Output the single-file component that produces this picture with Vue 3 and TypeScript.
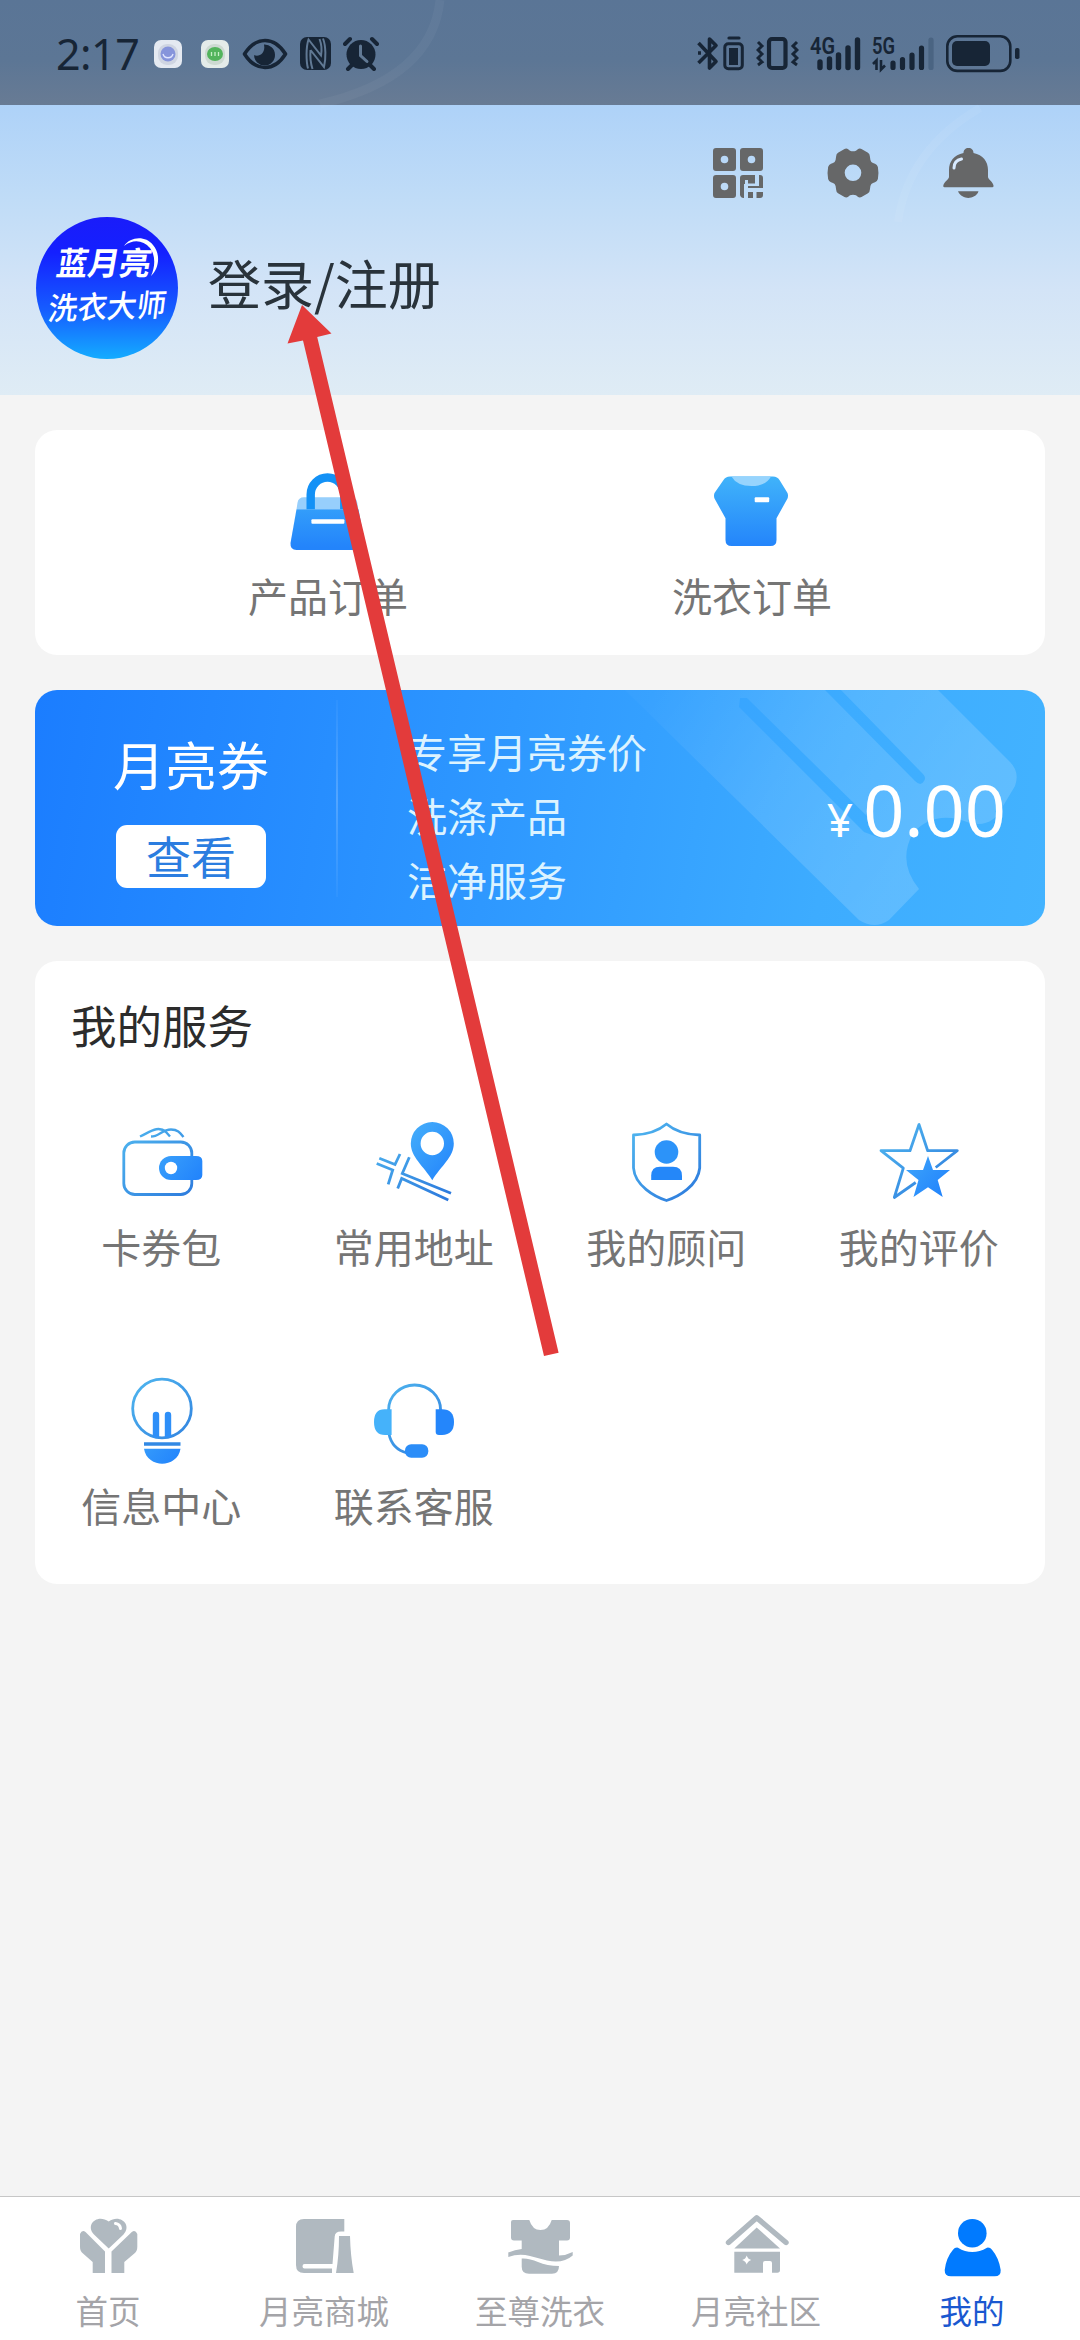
<script setup lang="ts">
interface Entry {
  id: string
  label: string
}

const orders: Entry[] = [
  { id: 'bag', label: '产品订单' },
  { id: 'shirt', label: '洗衣订单' },
]

const services: Entry[] = [
  { id: 'wallet', label: '卡券包' },
  { id: 'address', label: '常用地址' },
  { id: 'advisor', label: '我的顾问' },
  { id: 'review', label: '我的评价' },
  { id: 'info', label: '信息中心' },
  { id: 'support', label: '联系客服' },
]

const benefits: string[] = ['专享月亮券价', '洗涤产品', '洁净服务']

const tabs: Entry[] = [
  { id: 'home', label: '首页' },
  { id: 'mall', label: '月亮商城' },
  { id: 'wash', label: '至尊洗衣' },
  { id: 'community', label: '月亮社区' },
  { id: 'mine', label: '我的' },
]

const activeTab = 'mine'
</script>

<template>
  <div class="screen">
    <svg class="defs" width="0" height="0" aria-hidden="true">
      <defs>
        <linearGradient id="g-fill" x1="0" y1="0" x2="0" y2="90" gradientUnits="userSpaceOnUse">
          <stop offset="0.1" stop-color="#41b4fa" />
          <stop offset="0.9" stop-color="#2384fb" />
        </linearGradient>
        <linearGradient id="g-line" x1="10" y1="10" x2="80" y2="85" gradientUnits="userSpaceOnUse">
          <stop offset="0" stop-color="#4fb6ef" />
          <stop offset="1" stop-color="#2b77dc" />
        </linearGradient>
        <linearGradient id="g-solid" x1="10" y1="15" x2="80" y2="75" gradientUnits="userSpaceOnUse">
          <stop offset="0" stop-color="#4fbafa" />
          <stop offset="1" stop-color="#1f80fc" />
        </linearGradient>
      </defs>
    </svg>

    <header class="header">
      <div class="status">
        <span class="time">2:17</span>
        <svg class="app-one" width="28" height="28" viewBox="0 0 28 28">
          <rect width="28" height="28" rx="7" fill="#e4e9f1" />
          <rect x="4" y="4" width="20" height="21" rx="9" fill="#cfd5e2" />
          <circle cx="14" cy="14" r="7.5" fill="#8694db" />
          <path d="M9 14a5.2 5.2 0 0 0 10 0" fill="none" stroke="#e0e5ff" stroke-width="1.4" />
        </svg>
        <svg class="app-two" width="28" height="28" viewBox="0 0 28 28">
          <rect width="28" height="28" rx="7" fill="#e4ebe9" />
          <rect x="4" y="4" width="20" height="21" rx="9" fill="#cdd9d2" />
          <ellipse cx="14" cy="14" rx="8" ry="7" fill="#52b45c" />
          <path d="M10.500 12v4M14 12v4M17.500 12v4" stroke="#c6efc6" stroke-width="1.300" />
        </svg>
        <svg class="eye" width="46" height="32" viewBox="0 0 46 32">
          <path d="M2.500 16Q11 2.500 23 2.500T43.500 16Q35 29.500 23 29.500T2.500 16Z" fill="none" stroke="#172536" stroke-width="3.600" stroke-linejoin="round" />
          <path d="M22 6.500a10.500 10.500 0 1 1-10 10.500c4 2.500 12-1 10-10.500Z" fill="#172536" />
        </svg>
        <svg class="nfc" width="31" height="33" viewBox="0 0 31 33">
          <rect width="31" height="33" rx="7" fill="#172536" />
          <path d="M8 31.500C6 24 6 10 8.500 2.500L21 18.500C22 13 21.500 7 19.500 2M10.500 13C10 20 10.500 26 12.500 32M10.500 13 24 30C26 22 26 9 23 1.500" fill="none" stroke="#617994" stroke-width="2" />
        </svg>
        <svg class="alarm" width="36" height="35" viewBox="0 0 36 35">
          <circle cx="18" cy="18.500" r="14.500" fill="#172536" />
          <path d="M2 8 7 3M34 8 29 3M5 33l4-4M31 33l-4-4" stroke="#172536" stroke-width="4" stroke-linecap="round" />
          <path d="M17.500 10v9.500l6.500 6" fill="none" stroke="#617994" stroke-width="3" stroke-linecap="round" />
        </svg>

        <div class="status-right">
          <svg width="48" height="35" viewBox="0 0 48 35">
            <path d="M1.500 7 19 25.500 12.500 32V3L19 9.500 1.500 27M1 17h3" fill="none" stroke="#172536" stroke-width="3.600" stroke-linejoin="round" />
            <rect x="27.800" y="7.800" width="17.500" height="25" rx="3.500" fill="none" stroke="#172536" stroke-width="3" />
            <rect x="32" y="12" width="9" height="17" fill="#172536" />
            <path d="M32 2h10" stroke="#172536" stroke-width="3.200" stroke-linecap="round" />
          </svg>
          <svg class="vibrate" width="43" height="35" viewBox="0 0 43 35">
            <rect x="13" y="3" width="16.500" height="29" rx="3" fill="none" stroke="#172536" stroke-width="4.200" />
            <path d="m2 6 4 4-4 4 4 4-4 4 4 4-4 3M41 6l-4 4 4 4-4 4 4 4-4 4 4 3" fill="none" stroke="#172536" stroke-width="3" />
          </svg>
          <svg class="signal4" width="51" height="35" viewBox="0 0 51 35">
            <text class="net" x="0" y="17.500" textLength="25" lengthAdjust="spacingAndGlyphs">4G</text>
            <path d="M10 26v5.500M19.500 23v8.500M28.500 19v12.500M38 12v19.500M47.500 4v27.500" stroke="#172536" stroke-width="5.400" stroke-linecap="round" />
          </svg>
          <svg class="signal5" width="62" height="35" viewBox="0 0 62 35">
            <text class="net" x="0" y="17.500" textLength="23" lengthAdjust="spacingAndGlyphs">5G</text>
            <path d="m1 28 3.500-3.500V34M9 24v9.500l4-4" fill="none" stroke="#172536" stroke-width="2.600" />
            <path d="M21 27v4.500M30.500 23.500v8M40 19v12.500M49.500 12v19.500" stroke="#172536" stroke-width="5.200" stroke-linecap="round" />
            <path d="M59 4v27.500" stroke="#4a6482" stroke-width="5.200" stroke-linecap="round" />
          </svg>
          <svg class="battery" width="74" height="38" viewBox="0 0 74 38">
            <rect x="1.300" y="1.300" width="63" height="34.600" rx="10" fill="none" stroke="#172536" stroke-width="2.600" />
            <rect x="6" y="6" width="38" height="25" rx="5" fill="#172536" />
            <rect x="69" y="13" width="4.500" height="11" rx="1.800" fill="#172536" />
          </svg>
        </div>
      </div>

      <div class="tools">
        <svg width="50" height="50" viewBox="0 0 50 50">
          <path fill="#666768" fill-rule="evenodd" d="M3 0h17a3 3 0 0 1 3 3v17a3 3 0 0 1-3 3H3a3 3 0 0 1-3-3V3a3 3 0 0 1 3-3Zm8.500 7.700a3.800 3.800 0 1 0 0 7.600 3.800 3.800 0 0 0 0-7.600ZM30 0h17a3 3 0 0 1 3 3v17a3 3 0 0 1-3 3H30a3 3 0 0 1-3-3V3a3 3 0 0 1 3-3Zm8.500 7.700a3.800 3.800 0 1 0 0 7.600 3.800 3.800 0 0 0 0-7.600ZM3 27h17a3 3 0 0 1 3 3v17a3 3 0 0 1-3 3H3a3 3 0 0 1-3-3V30a3 3 0 0 1 3-3Zm8.500 7.700a3.800 3.800 0 1 0 0 7.600 3.800 3.800 0 0 0 0-7.600Z" />
          <path fill="#666768" d="M30 27h12v8.500h-7V32h-3v4h-1v14a4 4 0 0 1-4-3V30a3 3 0 0 1 3-3ZM46 27h1a3 3 0 0 1 3 3v10H35v-2h11ZM35 44h5v6h-5ZM43.500 44H50v3a3 3 0 0 1-3 3h-3.500Z" />
        </svg>
        <svg width="52" height="50" viewBox="0 0 52 50">
          <path fill="#666768" fill-rule="evenodd" d="M17.500 1Q19.500 0 21.500 1.500L23 2.700Q26 4 29 2.700L30.500 1.500Q32.500 0 34.500 1L41 4.800Q42.800 6 42.900 8.500L43.400 12Q44 14.300 46 15L48 15.800Q50.200 16.500 50.900 19Q52 25 50.900 31Q50.200 33.500 48 34.200L46 35Q44 35.700 43.400 38L42.900 41.500Q42.800 44 41 45.200L34.500 49Q32.500 50 30.500 48.500L29 47.300Q26 46 23 47.300L21.500 48.500Q19.500 50 17.500 49L11 45.200Q9.200 44 9.100 41.500L8.600 38Q8 35.700 6 35L4 34.200Q1.800 33.500 1.100 31Q0 25 1.100 19Q1.800 16.500 4 15.800L6 15Q8 14.300 8.600 12L9.100 8.500Q9.200 6 11 4.800ZM26 16.500a8.300 8.300 0 1 0 0 16.600 8.300 8.300 0 0 0 0-16.600Z" />
        </svg>
        <svg width="51" height="50" viewBox="0 0 51 50">
          <path fill="#666768" d="M25.500 0c3 0 5 2 5 5C40 7 45 13.500 45 22v7c0 2 5 5 5.500 8.500.3 1.500-.8 1.800-2 1.800h-46C1 39.300 0 39 .3 37.500 1 34 6 31 6 29v-7C6 13.500 11 7 20.500 5c0-3 2-5 5-5ZM15 43.300h20.500C34 48 29 50 25.300 50S17 48 15 43.300Z" />
          <path d="M11 20c0-4.500 2.500-8 7.500-9" fill="none" stroke="#d8eaff" stroke-width="3" stroke-linecap="round" />
        </svg>
      </div>

      <div class="profile">
        <svg class="avatar" width="142" height="142" viewBox="0 0 142 142">
          <defs>
            <linearGradient id="g-avatar" x1="0" y1="0" x2="0" y2="1">
              <stop offset="0" stop-color="#1a1cfa" />
              <stop offset="0.25" stop-color="#1420ff" />
              <stop offset="0.65" stop-color="#165cff" />
              <stop offset="1" stop-color="#14acff" />
            </linearGradient>
          </defs>
          <circle cx="71" cy="71" r="71" fill="url(#g-avatar)" />
          <text class="brand" x="0" y="0" transform="translate(19 58) skewX(-10)" textLength="94" lengthAdjust="spacingAndGlyphs">蓝月亮</text>
          <path d="M88 29C94 20 109 18 117 28c8 9 6 24-2 31 4-9 5-20-1-28-7-8-17-9-26-2Z" fill="#fff" />
          <text class="slogan" x="0" y="0" transform="translate(11 103) rotate(-2) skewX(-9)" textLength="118" lengthAdjust="spacingAndGlyphs">洗衣大师</text>
        </svg>
        <span class="login">登录/注册</span>
      </div>

      <svg class="rings" width="1080" height="395" viewBox="0 0 1080 395" aria-hidden="true">
        <path d="M440 0Q432 78 320 104" fill="none" stroke="#fff" stroke-opacity="0.04" stroke-width="9" />
        <path d="M980 108Q908 150 898 222" fill="none" stroke="#fff" stroke-opacity="0.06" stroke-width="8" />
      </svg>
    </header>

    <main class="content">
      <section class="card orders">
        <div v-for="o in orders" :key="o.id" class="order">
          <svg width="90" height="90" viewBox="0 0 90 90">
            <template v-if="o.id === 'bag'">
              <path d="M21 31.300h47q5.500 0 6.300 5.500l1 6.500H13.500l1-6.500q.8-5.500 6.500-5.500Z" fill="#97cffc" />
              <path d="M13.500 43.300h62L81.500 77q.6 7-6 7h-62q-6.500 0-6-7Z" fill="url(#g-fill)" />
              <path d="M27.700 43.300V28.500a16.800 17 0 0 1 33.600 0v14.800" fill="none" stroke="#1391f6" stroke-width="8.400" />
              <rect x="28.400" y="53.300" width="33" height="4.400" rx="1" fill="#fff" />
            </template>
            <template v-else>
              <path d="M23 10.500h43q4.500 0 6.500 3.500l8 13q1 2.500 0 5.500L69.500 52.300V74q0 6-6 6h-39q-6 0-6-6V52.300L7.500 32.500q-1-3 0-5.500l9-13q2-3.500 6.500-3.500Z" fill="url(#g-fill)" />
              <path d="M24.400 10.500H64Q59 20 44.500 20T24.400 10.500Z" fill="#97d4fd" />
              <rect x="47.700" y="31.300" width="14.500" height="5" rx="1" fill="#fff" />
            </template>
          </svg>
          <span class="label">{{ o.label }}</span>
        </div>
      </section>

      <section class="voucher">
        <svg class="ticket" width="1010" height="236" viewBox="0 0 1010 236" aria-hidden="true">
          <defs>
            <linearGradient id="g-ticket" x1="610" y1="10" x2="860" y2="190" gradientUnits="userSpaceOnUse">
              <stop offset="0" stop-color="#fff" stop-opacity="0.02" />
              <stop offset="0.5" stop-color="#fff" stop-opacity="0.11" />
              <stop offset="1" stop-color="#fff" stop-opacity="0.16" />
            </linearGradient>
          </defs>
          <path fill="url(#g-ticket)" fill-rule="evenodd" d="M590 0H903L975 72Q985 82 980 96L968 116Q958 138 935 133Q900 119 878 143Q862 172 884 199L854 230Q840 240 824 230ZM705 8l-1 9L829 142l16 6-9-18L712 8ZM790 0 880 91q6 6 9 0 3-4-3-9L806 0Z" />
        </svg>
        <div class="voucher-left">
          <span class="voucher-title">月亮券</span>
          <span class="voucher-btn">查看</span>
        </div>
        <div class="divider"></div>
        <div class="benefits">
          <span v-for="b in benefits" :key="b">{{ b }}</span>
        </div>
        <div class="price"><span class="yen">¥</span><span class="amount">0.00</span></div>
      </section>

      <section class="card services">
        <h2>我的服务</h2>
        <div class="grid">
          <div v-for="s in services" :key="s.id" class="service">
            <svg width="90" height="90" viewBox="0 0 90 90">
              <g v-if="s.id === 'wallet'">
                <rect x="7.800" y="25" width="68" height="52.500" rx="11" fill="none" stroke="url(#g-line)" stroke-width="2.800" />
                <path d="M24 19.500C34 15 42 8 50 15l4 4.500M35 19.500c8 0 11-7 20-7 7 0 9 3 12.500 7.500" fill="none" stroke="url(#g-line)" stroke-width="2.400" />
                <path d="M55 39h25q6.300 0 6.300 5v14q0 5-6.300 5H55a12 12 0 0 1 0-24Z" fill="url(#g-solid)" />
                <circle cx="55" cy="51" r="6.200" fill="#fff" />
              </g>
              <g v-else-if="s.id === 'address'">
                <path fill="url(#g-solid)" fill-rule="evenodd" d="M63.300 5a21.500 21.500 0 0 1 21.500 21.500C84.800 40 72 49 63.300 63.200 54.500 49 41.800 40 41.800 26.500A21.500 21.500 0 0 1 63.300 5Zm0 9.800a11.700 11.700 0 1 0 0 23.400 11.700 11.700 0 0 0 0-23.400Z" />
                <path d="M10.300 41.300 26 47.500 31 37M7.700 46.500l16 6.500-4.500 14.300M40.300 40.300l-7 16.200L82 76.300M28.700 71.500l4-10L79.300 83" fill="none" stroke="url(#g-line)" stroke-width="2.800" />
              </g>
              <g v-else-if="s.id === 'advisor'">
                <path d="M45.500 7Q58 17.500 78.700 18v33C77 69 57 80 45.500 83.500 34 80 14 69 12.500 51V18Q33 17.500 45.500 7Z" fill="none" stroke="url(#g-line)" stroke-width="2.800" stroke-linejoin="round" />
                <circle cx="45.500" cy="35" r="11.800" fill="#2c93f9" />
                <path d="M39 49.700h13q9 0 9 9V63H30.200v-4.300q0-9 8.800-9Z" fill="#2487f9" />
              </g>
              <g v-else-if="s.id === 'review'">
                <path d="m61.700 50.500 21.600-16.800H53.700L45 7.500l-9 26.200H7l22.300 17.500-9 29.300 21.400-15" fill="none" stroke="url(#g-line)" stroke-width="2.800" stroke-linejoin="round" />
                <path d="m54 39 5 14h17L63.700 63l5 17L54 70.300 39.500 80l5-17L32 53h17Z" fill="url(#g-solid)" />
              </g>
              <g v-else-if="s.id === 'info'">
                <circle cx="46" cy="32.500" r="29.300" fill="none" stroke="url(#g-line)" stroke-width="2.800" />
                <path d="M36.800 61.500V39a3.200 3.200 0 0 1 6.400 0v22.500ZM48.800 61.500V39a3.200 3.200 0 0 1 6.400 0v22.500Z" fill="#2e8ff8" />
                <path d="M28 66.300h36.500v3.400H28Z" fill="#3289e4" />
                <path d="M28 72.700h36.500C63 83 54 87.700 46.200 87.700S29.500 83 28 72.700Z" fill="url(#g-solid)" />
              </g>
              <g v-else>
                <path d="M19.600 34a26 25 0 0 1 52 0M20 58q3 15 18 19" fill="none" stroke="url(#g-line)" stroke-width="2.800" />
                <path d="M22.600 33.300V59H16Q5 59 5 46t11-12.700Z" fill="#45b2fa" />
                <path d="M66.700 33.300H73q12 0 12 12.700T73 59h-3q-3.300 0-3.300-3Z" fill="#2486fb" />
                <rect x="36" y="68.300" width="23.300" height="13.400" rx="6.200" fill="#2b8df8" />
              </g>
            </svg>
            <span class="label">{{ s.label }}</span>
          </div>
        </div>
      </section>
    </main>

    <nav class="tabbar">
      <div v-for="t in tabs" :key="t.id" class="tab" :class="{ active: t.id === activeTab }">
        <svg width="70" height="70" viewBox="0 0 70 70" fill="currentColor">
          <g v-if="t.id === 'home'">
            <path d="M35.700 38.500 21 24.500C12 15 24 3.500 35.700 11.500 47 3.500 59.500 15 50.500 24.500Z" />
            <path d="M42.500 13.500q4.500.5 5 5" fill="none" stroke="#fff" stroke-width="3" stroke-linecap="round" />
            <path d="M7 24q2-4.500 5.500-2L32 41.500V63H19.700V52L10 43.500Q7 41 7 37ZM64.300 24q-2-4.500-5.500-2L38.500 41.500V63h12.800V52l10-8.500q3-2.500 3-6.500Z" />
          </g>
          <g v-else-if="t.id === 'mall'">
            <path d="M15 9h40.300v12.500H52q-6 0-6.300 5L43.500 54H15.500q-2 0-2 2.200t2 2.200H43V63H15q-8 0-8-8V17q0-8 8-8Z" />
            <path d="M50 26h11q.5 20 3.700 37H47q3-17 3-37Z" />
          </g>
          <g v-else-if="t.id === 'wash'">
            <path d="M8 10h16.300q3 10 11.200 10t11.200-10H62q3 0 3 3v14.500q0 3-3 3h-8v15q7 0 13.700-3.500V45.500Q58 54 42 50.500L25 46Q14 43 3.300 47v-4.500Q10 39.500 16.700 39V30.500H9q-3 0-3-3V12q0-2 2-2Z" />
            <path d="M16.700 48.500Q24 48 33 52t21 4q0 7.700-7 7.700H24q-7.300 0-7.300-7Z" />
          </g>
          <g v-else-if="t.id === 'community'">
            <path d="M7.500 32.500 35.700 7.700 65 32.500" fill="none" stroke="currentColor" stroke-width="5.400" stroke-linecap="round" stroke-linejoin="round" />
            <path d="M13.300 38.500 35.700 17.500 59 38.500Z" />
            <path fill-rule="evenodd" d="M13.300 41.700H59V60q0 2.700-2.700 2.700H51V53q0-2-2-2h-5q-2 0-2 2v9.700H13.300ZM25.700 45.500q1 3.500 4.500 4.500-3.500 1-4.500 4.500-1-3.500-4.500-4.500 3.500-1 4.500-4.500Z" />
          </g>
          <g v-else>
            <circle cx="35.300" cy="23.200" r="14.300" />
            <path d="M21 37.700Q28 42 35.300 42T50 37.700q3-.5 5 2Q62 48 63.700 60q.3 6.300-6 6.300H14q-6.500 0-6.300-6.300Q9 48 16 39.700q2-2.500 5-2Z" />
          </g>
        </svg>
        <span>{{ t.label }}</span>
      </div>
    </nav>

    <svg class="arrow" width="1080" height="2340" viewBox="0 0 1080 2340" aria-hidden="true">
      <path d="M302 305 331.500 333.500 317.200 337 558.600 1352.700 544 1356 303 340.500 287.500 343.500Z" fill="#e33b3b" />
    </svg>
  </div>
</template>

<style>
body {
  margin: 0;
  background: #f4f4f4;
}
</style>

<style scoped>
.screen {
  position: relative;
  display: flex;
  flex-direction: column;
  width: 1080px;
  height: 2340px;
  overflow: hidden;
  background: #f4f4f4;
  font-family: 'Noto Sans CJK SC', 'Noto Sans', sans-serif;
}

svg {
  display: block;
  flex: none;
}

.defs,
.rings,
.ticket,
.arrow {
  position: absolute;
  top: 0;
  left: 0;
  pointer-events: none;
}

.header {
  position: relative;
  height: 395px;
  background: linear-gradient(180deg, #a6cbf5 0, #aed2f8 105px, #c0dcf7 200px, #d3e4f7 290px, #dfecf5 395px);
}

.status {
  display: flex;
  box-sizing: border-box;
  height: 105px;
  padding-left: 56px;
  background: linear-gradient(180deg, #5a7596 0, #5c7695 60px, #687b94 105px);
}

.time {
  width: 98px;
  margin-top: 24px;
  font: 43px/60px 'Noto Sans', sans-serif;
  letter-spacing: -0.5px;
  color: #172536;
}

.app-one,
.app-two {
  margin-top: 40px;
}

.app-two {
  margin-left: 19px;
}

.eye {
  margin: 38px 0 0 13px;
}

.nfc {
  margin: 37px 0 0 12px;
}

.alarm {
  margin: 36px 0 0 12px;
}

.status-right {
  display: flex;
  margin: 36px 60px 0 auto;
}

.vibrate {
  margin-left: 11px;
}

.signal4,
.signal5 {
  overflow: visible;
  margin-left: 11px;
}

.battery {
  margin: -1px 0 0 12px;
}

.net {
  font: 600 23px Roboto, sans-serif;
  fill: #172536;
}

.tools {
  display: flex;
  justify-content: flex-end;
  gap: 64px;
  padding: 43px 86px 0 0;
}

.profile {
  display: flex;
  align-items: center;
  margin-top: 19px;
  padding-left: 36px;
}

.avatar {
  overflow: visible;
}

.brand {
  font-size: 32px;
  font-weight: 700;
  fill: #fff;
}

.slogan {
  font-size: 31px;
  font-weight: 500;
  fill: #fff;
}

.login {
  margin: -12px 0 0 30px;
  font-size: 53px;
  line-height: 60px;
  color: #29333b;
}

.content {
  display: flex;
  flex: 1;
  flex-direction: column;
  gap: 35px;
  padding: 35px 35px 0;
}

.card {
  box-sizing: border-box;
  border-radius: 22px;
  background: #fff;
}

.label {
  font-size: 40px;
  line-height: 50px;
  color: #757575;
}

.orders {
  display: flex;
  height: 225px;
  padding: 36px 81px 0;
}

.order {
  display: flex;
  flex: 1;
  flex-direction: column;
  align-items: center;
  gap: 14px;
}

.voucher {
  position: relative;
  display: flex;
  height: 236px;
  overflow: hidden;
  border-radius: 22px;
  background: linear-gradient(100deg, #1b7dff 0%, #2e98ff 46%, #3dacff 78%, #43b3ff 100%);
  color: #fff;
}

.voucher-left {
  display: flex;
  flex-direction: column;
  align-items: center;
  width: 302px;
  margin-left: 5px;
  padding-top: 44px;
  box-sizing: border-box;
}

.voucher-title {
  font-size: 52px;
  line-height: 60px;
}

.voucher-btn {
  width: 150px;
  height: 63px;
  margin-top: 31px;
  border-radius: 11px;
  background: #fff;
  font-size: 45px;
  line-height: 61px;
  text-align: center;
  color: #2b7de0;
}

.divider {
  width: 2px;
  height: 197px;
  margin: 10px 0 0 -6px;
  background: linear-gradient(180deg, rgba(255, 255, 255, 0.03), rgba(255, 255, 255, 0.2), rgba(255, 255, 255, 0.03));
}

.benefits {
  display: flex;
  flex-direction: column;
  margin-left: 69px;
  padding-top: 29px;
  font-size: 40px;
  line-height: 64px;
  color: #dcf3ff;
}

.price {
  display: flex;
  align-items: baseline;
  margin: 69px 39px 0 auto;
  font-family: 'Noto Sans', sans-serif;
  line-height: 100px;
}

.yen {
  margin-right: 10px;
  font-size: 46px;
}

.amount {
  font-size: 72px;
}

.services {
  height: 623px;
}

.services h2 {
  margin: 0;
  padding: 33px 0 0 36px;
  font-size: 45.500px;
  font-weight: 400;
  line-height: 60px;
  color: #2c2c2c;
}

.grid {
  display: grid;
  grid-template-columns: repeat(4, 1fr);
  row-gap: 105px;
  padding-top: 63px;
}

.service {
  display: flex;
  flex-direction: column;
  align-items: center;
  gap: 14px;
}

.tabbar {
  display: flex;
  box-sizing: border-box;
  height: 144px;
  border-top: 1px solid #c6c6c6;
  background: #fff;
}

.tab {
  display: flex;
  flex: 1;
  flex-direction: column;
  align-items: center;
  padding-top: 13px;
  color: #b0b9c0;
}

.tab span {
  margin-top: 9px;
  font-size: 32.500px;
  line-height: 42px;
  color: #a4a4a8;
}

.tab.active {
  color: #007aff;
}

.tab.active span {
  color: #1a58d0;
}
</style>
